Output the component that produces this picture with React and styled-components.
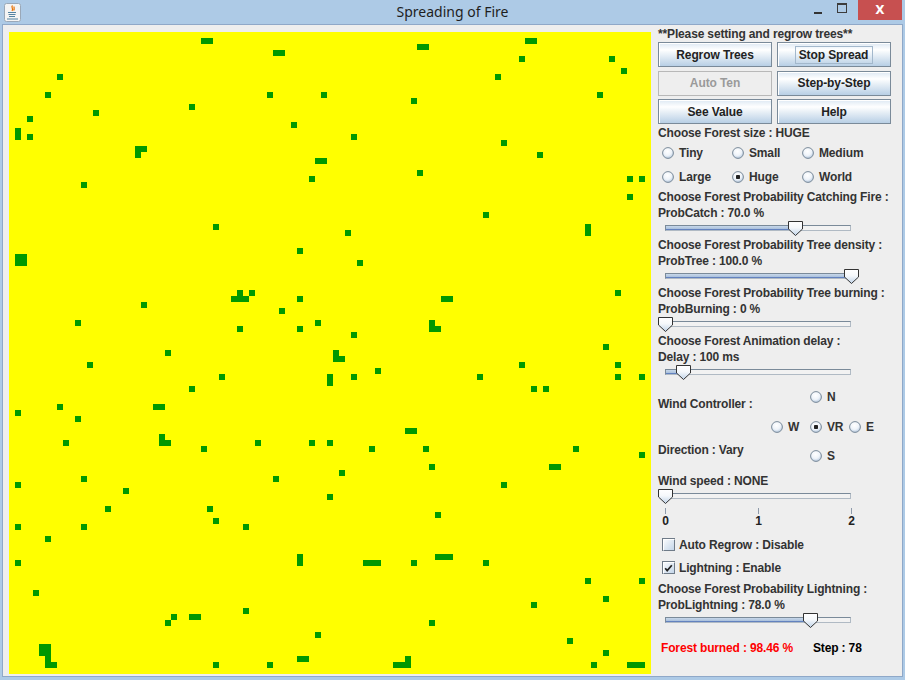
import React from 'react'
import styled, { createGlobalStyle } from 'styled-components'

const GlobalStyle = createGlobalStyle`
  html, body {
    margin: 0;
    padding: 0;
  }
  body {
    width: 905px;
    height: 680px;
    overflow: hidden;
    background: #adcae6;
  }
`

const CELL = 6
const GRID = 107

// [col, row] of the trees still standing
const TREES = [
  [32, 1], [33, 1], [44, 3], [45, 3], [8, 7], [6, 10], [43, 10], [52, 10], [30, 12], [14, 13],
  [3, 14], [47, 15], [1, 16], [1, 17], [3, 17], [21, 19], [22, 19], [21, 20], [51, 21], [52, 21],
  [50, 24], [12, 25], [34, 32], [48, 36], [1, 37], [2, 37], [1, 38], [2, 38], [38, 43], [40, 43],
  [37, 44], [38, 44], [39, 44], [48, 44], [22, 45], [45, 46], [11, 48], [51, 48], [38, 49], [48, 49],
  [26, 53],
  [86, 1], [87, 1], [68, 2], [69, 2], [85, 4], [100, 4], [102, 6], [81, 7], [98, 10], [67, 11],
  [57, 17], [82, 18], [88, 20], [68, 23], [103, 24], [105, 24], [103, 27], [79, 30], [56, 33], [96, 32],
  [96, 33], [58, 38], [101, 43], [72, 44], [73, 44], [70, 48], [70, 49], [71, 49], [57, 50], [99, 52],
  [13, 55], [35, 57], [53, 57], [53, 58], [30, 59], [8, 62], [24, 62], [25, 62], [1, 63], [11, 64],
  [25, 67], [25, 68], [26, 68], [9, 68], [41, 68], [50, 68], [53, 68], [32, 69], [12, 74], [44, 74],
  [1, 75], [19, 76], [53, 77], [16, 79], [33, 79], [34, 81], [1, 82], [12, 82], [39, 82], [6, 84],
  [48, 87], [48, 88], [1, 88], [4, 93], [39, 96], [27, 97], [30, 97], [31, 97], [26, 98], [51, 100],
  [5, 102], [6, 102], [5, 103], [6, 103], [6, 104], [6, 105], [7, 105], [48, 104], [49, 104], [34, 105],
  [43, 105],
  [54, 53], [54, 54], [55, 54], [85, 55], [101, 55], [61, 56], [57, 57], [78, 57], [101, 57], [105, 57],
  [87, 59], [89, 59], [66, 66], [67, 66], [60, 69], [69, 69], [94, 69], [105, 70], [70, 72], [90, 72],
  [91, 72], [55, 73], [82, 75], [71, 80], [71, 87], [72, 87], [73, 87], [59, 88], [60, 88], [61, 88],
  [67, 88], [79, 88], [96, 91], [105, 91], [99, 94], [87, 95], [70, 98], [93, 101], [99, 103], [66, 104],
  [64, 105], [65, 105], [66, 105], [97, 105], [103, 105], [104, 105], [105, 105]
]

const Window = styled.div`
  width: 905px;
  height: 680px;
  display: flex;
  flex-direction: column;
  background: #adcae6;
  box-sizing: border-box;
`

const TitleBar = styled.div`
  height: 24px;
  display: grid;
  grid-template-columns: 1fr auto 1fr;
  align-items: center;
`

const Title = styled.div`
  font-family: 'Noto Sans', 'Open Sans', sans-serif;
  font-size: 14px;
  color: #1e1e1e;
  line-height: 24px;
`

const AppIcon = styled.svg`
  margin-left: 4px;
  display: block;
`

const WinControls = styled.div`
  justify-self: end;
  align-self: start;
  display: flex;
  align-items: flex-start;
  margin-right: 3px;
`

const MinButton = styled.div`
  width: 26px;
  height: 20px;
  display: flex;
  justify-content: center;
  align-items: center;

  &::after {
    content: '';
    width: 8px;
    height: 2px;
    margin-top: 5px;
    margin-left: 4px;
    background: #333;
  }
`

const MaxButton = styled.div`
  width: 26px;
  height: 20px;
  display: flex;
  justify-content: center;
  align-items: center;

  &::after {
    content: '';
    width: 8px;
    height: 7px;
    margin-top: -5px;
    border: 1px solid #3c3c3c;
    border-top-width: 2px;
  }
`

const CloseButton = styled.div`
  width: 44px;
  height: 20px;
  background: #c75050;
  color: #fff;
  font-family: 'DejaVu Sans', sans-serif;
  font-size: 12px;
  font-weight: bold;
  display: flex;
  justify-content: center;
  align-items: center;
  margin-left: 3px;
`

const Client = styled.div`
  margin: 0 2px 3px 2px;
  flex: 1;
  display: flex;
  background: #eeeeee;
  border: 1px solid #8fa8c8;
`

const ForestArea = styled.div`
  padding: 7px 0 0 6px;
`

const ForestCanvas = styled.svg`
  display: block;
`

const Panel = styled.div`
  flex: 1;
  padding: 1px 0 0 7px;
  font-family: 'Liberation Sans', Arial, sans-serif;
  font-size: 12px;
  font-weight: bold;
  color: #333;
  letter-spacing: -0.15px;
`

const Line = styled.div`
  height: 16px;
  line-height: 16px;
  white-space: nowrap;
  margin-top: ${p => p.gap || 0}px;
`

const ButtonGrid = styled.div`
  display: grid;
  grid-template-columns: 114px 114px;
  grid-auto-rows: 25px;
  column-gap: 5px;
  row-gap: 3.5px;
  margin-bottom: 1px;
`

const Button = styled.button`
  margin: 0;
  padding: 0;
  font-family: 'Liberation Sans', Arial, sans-serif;
  font-size: 12px;
  font-weight: bold;
  letter-spacing: -0.1px;
  color: ${p => (p.disabled ? '#9a9a9a' : '#222')};
  border: 1px solid ${p => (p.disabled ? '#b8b8b8' : '#7a8a99')};
  background: ${p => (p.disabled
    ? '#eeeeee'
    : 'linear-gradient(#dde8f3 0%, #ffffff 30%, #f4f8fb 40%, #b8cfe5 100%)')};
  box-shadow: ${p => (p.disabled ? 'none' : 'inset 1px 1px 0 #ffffff')};
  display: flex;
  justify-content: center;
  align-items: center;
`

const FocusText = styled.span`
  border: 1px solid #a3b8cc;
  padding: 1px 4px 1px 3px;
`

const SizeGrid = styled.div`
  display: grid;
  grid-template-columns: repeat(3, 70px);
  grid-auto-rows: 24px;
  padding-left: 4px;
`

const Choice = styled.label`
  display: flex;
  align-items: center;
  gap: ${p => p.gap || 5}px;
  white-space: nowrap;
`

const SliderBox = styled.div`
  position: relative;
  width: 200px;
  height: 16px;
  padding-top: 4px;
  box-sizing: border-box;
`

const Track = styled.div`
  margin: 0 7px;
  height: 6px;
  box-sizing: border-box;
  border: 1px solid #7a8a99;
  border-right-color: #b0bac4;
  border-bottom-color: #b0bac4;
  background: #f2f2f2;
  display: flex;
`

const TrackFill = styled.div`
  height: 100%;
  background: linear-gradient(#c8d8ea, #9fb7d6);
  box-shadow: inset 0 -1px 0 #6382bf;
`

const Thumb = styled.svg`
  position: absolute;
  top: 0;
  display: block;
`

const Ticks = styled.div`
  margin: 3px 0 0 7px;
  width: 187px;
  height: 6px;
  display: flex;
  justify-content: space-between;
`

const Tick = styled.div`
  width: 1px;
  background: #8e9aaa;
`

const TickLabels = styled.div`
  margin-left: -2.5px;
  width: 206px;
  height: 14px;
  line-height: 14px;
  display: flex;
  justify-content: space-between;
  margin-bottom: 5px;
`

const TickLabel = styled.div`
  width: 20px;
  text-align: center;
  color: #222;
`

const WindBlock = styled.div`
  display: flex;
  margin-bottom: 3px;
`

const WindLabels = styled.div`
  width: 113px;
  padding-top: 15px;
`

const WindGrid = styled.div`
  display: grid;
  grid-template-columns: repeat(3, 39px);
  grid-template-rows: 31px 29px 29px;
`

const GridCell = styled.div`
  grid-column: ${p => p.col};
  grid-row: ${p => p.row};
  display: flex;
  align-items: center;
`

const CheckRow = styled.div`
  height: 23px;
  padding-left: 4px;
  display: flex;
  align-items: center;
`

const ResultRow = styled.div`
  margin-top: 11px;
  height: 16px;
  line-height: 16px;
  padding-left: 3px;
  display: flex;
`

const Burned = styled.div`
  width: 152px;
  color: #ff0000;
  white-space: nowrap;
`

const Steps = styled.div`
  color: #000;
`

const RadioIcon = ({ checked }) => (
  <svg width="12" height="12" viewBox="0 0 12 12">
    <defs>
      <radialGradient id="rg" cx="45%" cy="35%" r="70%">
        <stop offset="0%" stopColor="#ffffff" />
        <stop offset="55%" stopColor="#eef3f9" />
        <stop offset="100%" stopColor="#a9bfd8" />
      </radialGradient>
    </defs>
    <circle cx="6" cy="6" r="5.4" fill="url(#rg)" stroke="#7a8a99" strokeWidth="1" />
    {checked && <rect x="4" y="4" width="4" height="4" rx="0.8" fill="#222" />}
  </svg>
)

const Radio = ({ label, checked }) => (
  <Choice>
    <RadioIcon checked={checked} />
    <span>{label}</span>
  </Choice>
)

const CheckIcon = ({ checked }) => (
  <svg width="13" height="13" viewBox="0 0 13 13">
    <defs>
      <linearGradient id="cg" x1="0" y1="0" x2="1" y2="1">
        <stop offset="0%" stopColor="#ffffff" />
        <stop offset="100%" stopColor="#c2d4e8" />
      </linearGradient>
    </defs>
    <rect x="0.5" y="0.5" width="12" height="12" fill="url(#cg)" stroke="#6f7b88" />
    <path d="M1.5 12.5 V1.5 H12.5" fill="none" stroke="#ffffff" strokeWidth="1" />
    {checked && (
      <path d="M3.2 7.2 L5.2 9.6 L9.8 4.2" fill="none" stroke="#222" strokeWidth="1.7" />
    )}
  </svg>
)

const Slider = ({ value }) => {
  const left = 7 + value * 186 - 7.5
  return (
    <SliderBox>
      <Track>
        <TrackFill style={{ width: `${value * 100}%` }} />
      </Track>
      <Thumb width="15" height="15" viewBox="0 0 15 15" style={{ left }}>
        <defs>
          <linearGradient id="tg" x1="0" y1="0" x2="0" y2="1">
            <stop offset="0%" stopColor="#ffffff" />
            <stop offset="45%" stopColor="#f5f8fb" />
            <stop offset="100%" stopColor="#bfd2e7" />
          </linearGradient>
        </defs>
        <path d="M0.5 0.5 H14.5 V8 L7.5 14.5 L0.5 8 Z" fill="url(#tg)" stroke="#333" strokeWidth="1" />
      </Thumb>
    </SliderBox>
  )
}

const JavaIcon = () => (
  <AppIcon width="17" height="19" viewBox="0 0 17 19">
    <rect x="0.5" y="0.5" width="16" height="18" rx="2" fill="#f4f4f4" stroke="#9aa8b8" />
    <path d="M8.5 2.5 C6.5 4.5 10 5.5 8 8 M10.2 3.5 C9.5 5 11 6 9.6 7.5" fill="none" stroke="#e76f00" strokeWidth="1.2" />
    <path d="M4 9.5 H12 M4.5 11.5 H11.5 M5 13.5 H11 M3 16 H14" fill="none" stroke="#5382a1" strokeWidth="1.2" />
  </AppIcon>
)

const Forest = () => (
  <ForestCanvas width={GRID * CELL} height={GRID * CELL} shapeRendering="crispEdges">
    <rect width={GRID * CELL} height={GRID * CELL} fill="#ffff00" />
    {TREES.map(([c, r]) => (
      <rect key={`${c}-${r}`} x={c * CELL} y={r * CELL} width={CELL} height={CELL} fill="#009900" />
    ))}
  </ForestCanvas>
)

const SliderGroup = ({ title, value, fraction }) => (
  <div>
    <Line>{title}</Line>
    <Line>{value}</Line>
    <Slider value={fraction} />
  </div>
)

const App = () => {
  return (
    <Window>
      <GlobalStyle />
      <TitleBar>
        <JavaIcon />
        <Title>Spreading of Fire</Title>
        <WinControls>
          <MinButton />
          <MaxButton />
          <CloseButton>X</CloseButton>
        </WinControls>
      </TitleBar>
      <Client>
        <ForestArea>
          <Forest />
        </ForestArea>
        <Panel>
          <Line>**Please setting and regrow trees**</Line>
          <ButtonGrid>
            <Button>Regrow Trees</Button>
            <Button><FocusText>Stop Spread</FocusText></Button>
            <Button disabled>Auto Ten</Button>
            <Button>Step-by-Step</Button>
            <Button>See Value</Button>
            <Button>Help</Button>
          </ButtonGrid>
          <Line>Choose Forest size : HUGE</Line>
          <SizeGrid>
            <Radio label="Tiny" />
            <Radio label="Small" />
            <Radio label="Medium" />
            <Radio label="Large" />
            <Radio label="Huge" checked />
            <Radio label="World" />
          </SizeGrid>
          <SliderGroup title="Choose Forest Probability Catching Fire :" value="ProbCatch : 70.0 %" fraction={0.7} />
          <SliderGroup title="Choose Forest Probability Tree density :" value="ProbTree : 100.0 %" fraction={1} />
          <SliderGroup title="Choose Forest Probability Tree burning :" value="ProbBurning : 0 %" fraction={0} />
          <SliderGroup title="Choose Forest Animation delay :" value="Delay : 100 ms" fraction={0.1} />
          <WindBlock>
            <WindLabels>
              <Line>Wind Controller :</Line>
              <Line gap={30}>Direction : Vary</Line>
            </WindLabels>
            <WindGrid>
              <GridCell col={2} row={1}><Radio label="N" /></GridCell>
              <GridCell col={1} row={2}><Radio label="W" /></GridCell>
              <GridCell col={2} row={2}><Radio label="VR" checked /></GridCell>
              <GridCell col={3} row={2}><Radio label="E" /></GridCell>
              <GridCell col={2} row={3}><Radio label="S" /></GridCell>
            </WindGrid>
          </WindBlock>
          <Line>Wind speed : NONE</Line>
          <Slider value={0} />
          <Ticks>
            <Tick />
            <Tick />
            <Tick />
          </Ticks>
          <TickLabels>
            <TickLabel>0</TickLabel>
            <TickLabel>1</TickLabel>
            <TickLabel>2</TickLabel>
          </TickLabels>
          <CheckRow>
            <Choice gap={4}><CheckIcon /><span>Auto Regrow : Disable</span></Choice>
          </CheckRow>
          <CheckRow>
            <Choice gap={4}><CheckIcon checked /><span>Lightning : Enable</span></Choice>
          </CheckRow>
          <Line gap={2}>Choose Forest Probability Lightning :</Line>
          <Line>ProbLightning : 78.0 %</Line>
          <Slider value={0.78} />
          <ResultRow>
            <Burned>Forest burned : 98.46 %</Burned>
            <Steps>Step : 78</Steps>
          </ResultRow>
        </Panel>
      </Client>
    </Window>
  )
}

export default App
